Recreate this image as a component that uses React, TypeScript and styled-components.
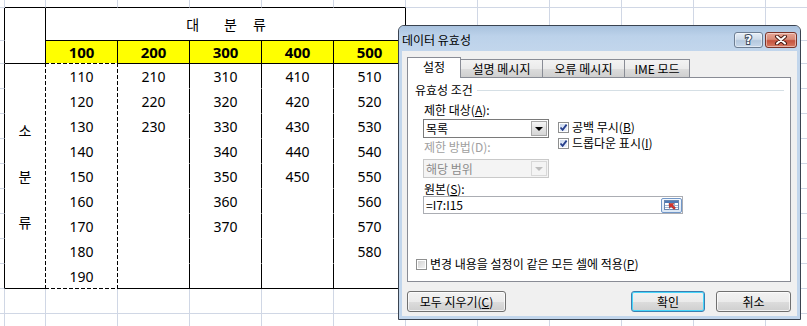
import React from 'react';
import styled, { createGlobalStyle } from 'styled-components';

const GlobalStyle = createGlobalStyle`
  html, body {
    margin: 0;
    padding: 0;
    background: #fff;
  }
  body {
    width: 807px;
    height: 326px;
    overflow: hidden;
  }
`;

const gridLine = '#d0d7e5';
const uiFont = `"Noto Sans CJK KR", "Noto Sans", sans-serif`;

const Page = styled.div`
  position: relative;
  width: 807px;
  height: 326px;
  overflow: hidden;
  font-family: "Noto Sans", "Noto Sans CJK KR", sans-serif;
`;

/* ---------- spreadsheet ---------- */

const Sheet = styled.div`
  display: grid;
  grid-template-columns: 5px 41px repeat(11, 72px);
  grid-template-rows: 8px 33px 23px repeat(11, 25px);
`;

const GridCell = styled.div<{ $right?: boolean; $bottom?: boolean }>`
  box-sizing: border-box;
  border-right: 1px solid ${p => (p.$right ? '#000' : gridLine)};
  border-bottom: 1px solid ${p => (p.$bottom ? '#000' : gridLine)};
`;

const Corner = styled.div`
  grid-column: 2 / 3;
  grid-row: 2 / 4;
  background: #fff;
  border-right: 1px solid #000;
  border-bottom: 1px solid #000;
`;

const Title = styled.div`
  grid-column: 3 / 8;
  grid-row: 2 / 3;
  background: #fff;
  border-right: 1px solid #000;
  border-bottom: 1px solid #000;
  display: flex;
  align-items: center;
  justify-content: center;
  font-family: "Noto Sans CJK KR", sans-serif;
  font-size: 14px;
  padding-left: 1px;
`;

const Gap = styled.span<{ $w: number }>`
  display: inline-block;
  width: ${p => p.$w}px;
`;

const HeadCell = styled.div<{ $col: number }>`
  grid-column: ${p => p.$col} / span 1;
  grid-row: 3 / 4;
  background: #ffff00;
  border-right: 1px solid #000;
  border-bottom: 1px solid #000;
  display: flex;
  align-items: center;
  justify-content: center;
  font-size: 15px;
  font-weight: 700;
`;

const SideHead = styled.div`
  grid-column: 2 / 3;
  grid-row: 4 / 13;
  background: #fff;
  border-right: 1px solid #000;
  border-bottom: 1px solid #000;
  display: flex;
  flex-direction: column;
  align-items: center;
  justify-content: center;
  gap: 26px;
  font-family: "Noto Sans CJK KR", sans-serif;
  font-size: 14px;
  line-height: 20px;
`;

const DataCell = styled.div<{ $col: number; $row: number; $last: boolean }>`
  grid-column: ${p => p.$col} / span 1;
  grid-row: ${p => p.$row} / span 1;
  background: #fff;
  border-right: 1px solid #000;
  border-bottom: 1px solid ${p => (p.$last ? '#000' : '#fff')};
  display: flex;
  align-items: center;
  justify-content: center;
  font-size: 14px;
`;

const ants = (dir: string) =>
  `repeating-linear-gradient(${dir}, #000 0 4px, #fff 4px 6px)`;

const Marquee = styled.div`
  grid-column: 3 / 4;
  grid-row: 4 / 13;
  margin: -1px 0 0 -1px;
  z-index: 1;
  pointer-events: none;
  background:
    ${ants('90deg')} top left / 100% 1px no-repeat,
    ${ants('90deg')} bottom left / 100% 1px no-repeat,
    ${ants('180deg')} top left / 1px 100% no-repeat,
    ${ants('180deg')} top right / 1px 100% no-repeat;
`;

const headers = ['100', '200', '300', '400', '500'];
const columns: string[][] = [
  ['110', '120', '130', '140', '150', '160', '170', '180', '190'],
  ['210', '220', '230'],
  ['310', '320', '330', '340', '350', '360', '370'],
  ['410', '420', '430', '440', '450'],
  ['510', '520', '530', '540', '550', '560', '570', '580'],
];

const SHEET_ROWS = 14;
const SHEET_COLS = 13;

const backgroundCells = () => {
  const cells: { r: number; c: number }[] = [];
  for (let r = 0; r < SHEET_ROWS; r++) {
    for (let c = 0; c < SHEET_COLS; c++) {
      const inTable = r >= 1 && r <= 11 && c >= 1 && c <= 6;
      if (!inTable) cells.push({ r, c });
    }
  }
  return cells;
};

const Spreadsheet = () => (
  <Sheet>
    <Corner />
    <Title>
      대<Gap $w={25}> </Gap>분<Gap $w={16}> </Gap>류
    </Title>
    {headers.map((h, i) => (
      <HeadCell key={h} $col={i + 3}>{h}</HeadCell>
    ))}
    <SideHead>
      <span>소</span>
      <span>분</span>
      <span>류</span>
    </SideHead>
    {columns.map((col, ci) =>
      Array.from({ length: 9 }, (_, ri) => (
        <DataCell key={`${ci}-${ri}`} $col={ci + 3} $row={ri + 4} $last={ri === 8}>
          {col[ri] || ''}
        </DataCell>
      ))
    )}
    <Marquee />
    {backgroundCells().map(({ r, c }) => (
      <GridCell
        key={`g${r}-${c}`}
        $right={c === 0 && r >= 1 && r <= 11}
        $bottom={r === 0 && c >= 1 && c <= 6}
      />
    ))}
  </Sheet>
);

/* ---------- dialog ---------- */

const Dialog = styled.div`
  position: absolute;
  left: 398px;
  top: 25px;
  width: 403px;
  height: 295px;
  box-sizing: border-box;
  border: 1px solid #3a4350;
  border-radius: 6px 6px 0 0;
  background: #c2d6ec;
  display: flex;
  flex-direction: column;
  overflow: hidden;
  font-family: ${uiFont};
  font-size: 12px;
  color: #000;
  z-index: 5;
`;

const TitleBar = styled.div`
  height: 25px;
  flex: none;
  display: flex;
  align-items: flex-start;
  padding: 0 3px;
  background: linear-gradient(#a9c2de, #bcd2ea 40%, #c2d6ec);
`;

const TitleText = styled.div`
  flex: 1;
  line-height: 14px;
  margin-top: 7px;
`;

const Captions = styled.div`
  display: flex;
  gap: 2px;
  margin-top: 6px;
`;

const CaptionButton = styled.div<{ $close?: boolean }>`
  width: ${p => (p.$close ? 32 : 29)}px;
  height: 16px;
  box-sizing: border-box;
  border: 1px solid ${p => (p.$close ? '#7a3328' : '#6d7e93')};
  border-radius: 3px;
  background: ${p =>
    p.$close
      ? 'linear-gradient(#e7a595, #d88b78 45%, #c5523d 55%, #d67a62)'
      : 'linear-gradient(#e6eef7, #cfdcea 45%, #b4c8de 55%, #c8d8ea)'};
  box-shadow: inset 0 0 0 1px rgba(255, 255, 255, 0.45);
  display: flex;
  align-items: center;
  justify-content: center;
`;

const HelpGlyph = styled.span`
  font-family: "DejaVu Sans", sans-serif;
  font-weight: 700;
  font-size: 12px;
  line-height: 12px;
  color: #fff;
  -webkit-text-stroke: 2px #3c4a5c;
  paint-order: stroke fill;
`;

const Body = styled.div`
  flex: 1;
  margin: 0 3px 3px;
  background: #f0f0f0;
  padding: 6px 6px 0 5px;
  display: flex;
  flex-direction: column;
`;

const Tabs = styled.div`
  display: flex;
  align-items: flex-end;
  height: 21px;
  margin-bottom: -1px;
  position: relative;
  z-index: 1;
`;

const Tab = styled.div<{ $active?: boolean; $w: number }>`
  width: ${p => p.$w}px;
  height: ${p => (p.$active ? 21 : 19)}px;
  box-sizing: border-box;
  border: 1px solid #898c95;
  border-bottom: ${p => (p.$active ? 'none' : '1px solid #898c95')};
  border-left-width: ${p => (p.$active ? 1 : 0)}px;
  background: ${p => (p.$active ? '#fff' : 'linear-gradient(#f3f3f3, #ebebeb 50%, #dddddd 51%, #cfcfcf)')};
  display: flex;
  align-items: center;
  justify-content: center;
  padding-bottom: ${p => (p.$active ? 2 : 0)}px;
  line-height: 14px;
`;

const Panel = styled.div`
  height: 205px;
  box-sizing: border-box;
  border: 1px solid #898c95;
  background: #fff;
  padding: 5px 6px 0 7px;
  display: flex;
  flex-direction: column;
`;

const GroupHeader = styled.div`
  display: flex;
  align-items: center;
  height: 14px;
  line-height: 14px;

  &::after {
    content: '';
    flex: 1;
    margin-left: 4px;
    border-top: 1px solid #d5dfe5;
  }
`;

const Fields = styled.div`
  display: flex;
  margin-top: 6px;
  padding-left: 8px;
`;

const FieldCol = styled.div<{ $w?: number }>`
  width: ${p => (p.$w ? `${p.$w}px` : 'auto')};
  display: flex;
  flex-direction: column;
`;

const RightCol = styled.div`
  display: flex;
  flex-direction: column;
  padding: 16px 0 0 9px;
`;

const Label = styled.div<{ $disabled?: boolean; $top?: number }>`
  height: 14px;
  line-height: 14px;
  margin: ${p => p.$top ?? 0}px 0 0 1px;
  color: ${p => (p.$disabled ? '#a0a0a0' : '#000')};
  white-space: nowrap;
`;

const Select = styled.div<{ $disabled?: boolean; $top?: number }>`
  height: 19px;
  margin-top: ${p => p.$top ?? 0}px;
  box-sizing: border-box;
  border: 1px solid ${p => (p.$disabled ? '#c9c9c9' : '#7a7a7a')};
  background: ${p => (p.$disabled ? '#f4f4f4' : '#fff')};
  color: ${p => (p.$disabled ? '#8b8b8b' : '#000')};
  display: flex;
  align-items: center;
  padding-left: 2px;
`;

const SelectText = styled.span`
  flex: 1;
  line-height: 14px;
`;

const ArrowButton = styled.div<{ $disabled?: boolean }>`
  width: 16px;
  height: 15px;
  margin-right: 1px;
  box-sizing: border-box;
  border: 1px solid ${p => (p.$disabled ? '#d8d8d8' : '#a7a7a7')};
  background: ${p => (p.$disabled ? '#f4f4f4' : 'linear-gradient(#f6f6f6, #e3e3e3 50%, #d6d6d6)')};
  display: flex;
  align-items: center;
  justify-content: center;

  &::before {
    content: '';
    border-left: 4px solid transparent;
    border-right: 4px solid transparent;
    border-top: 4px solid ${p => (p.$disabled ? '#bdbdbd' : '#000')};
  }
`;

const CheckRow = styled.div<{ $top?: number }>`
  display: flex;
  align-items: center;
  height: 16px;
  gap: 3px;
  margin-top: ${p => p.$top ?? 0}px;
  white-space: nowrap;
  line-height: 14px;
`;

const Box = styled.span<{ $checked?: boolean }>`
  width: 11px;
  height: 11px;
  flex: none;
  box-sizing: border-box;
  border: 1px solid #8e8f8f;
  background: ${p =>
    p.$checked
      ? 'linear-gradient(135deg, #c9d8ee, #eef3fb)'
      : 'linear-gradient(135deg, #cfcfcf, #f6f6f6)'};
  box-shadow: inset 0 0 0 1px #fff;
  display: flex;
  align-items: center;
  justify-content: center;
`;

const SourceInput = styled.div`
  width: 260px;
  height: 18px;
  box-sizing: border-box;
  border: 1px solid #abadb3;
  background: #fff;
  display: flex;
  align-items: center;
  padding-left: 2px;
`;

const InputText = styled.span`
  flex: 1;
  line-height: 14px;
`;

const RangeButton = styled.div`
  width: 21px;
  height: 15px;
  box-sizing: border-box;
  border: 1px solid #7197c8;
  border-radius: 2px;
  background: linear-gradient(#f4f8fd, #dbe7f5);
  display: flex;
  align-items: center;
  justify-content: center;
`;

const BottomCheck = styled(CheckRow)`
  margin-left: 1px;
`;

const Buttons = styled.div`
  display: flex;
  margin-top: 9px;
  gap: 11px;
`;

const Button = styled.div<{ $w: number; $focus?: boolean; $push?: boolean }>`
  width: ${p => p.$w}px;
  height: 21px;
  box-sizing: border-box;
  margin-left: ${p => (p.$push ? 'auto' : '0')};
  border: 1px solid ${p => (p.$focus ? '#3c7fb1' : '#707070')};
  border-radius: 3px;
  background: linear-gradient(#f2f2f2, #ebebeb 50%, #dddddd 51%, #cfcfcf);
  box-shadow: inset 0 0 0 1px ${p => (p.$focus ? '#48d6fb' : 'rgba(255,255,255,0.7)')};
  display: flex;
  align-items: center;
  justify-content: center;
  line-height: 14px;
`;

const CheckMark = () => (
  <svg width="9" height="9" viewBox="0 0 9 9">
    <path d="M1.5 4.5 L3.6 6.8 L7.6 1.6" fill="none" stroke="#263f8c" strokeWidth="1.8" />
  </svg>
);

const CloseGlyph = () => (
  <svg width="14" height="10" viewBox="0 0 14 10">
    <path d="M3 1.5 L11 8.5 M11 1.5 L3 8.5" stroke="#4a1c14" strokeWidth="4" strokeLinecap="round" />
    <path d="M3 1.5 L11 8.5 M11 1.5 L3 8.5" stroke="#fff" strokeWidth="2" strokeLinecap="round" />
  </svg>
);

const RangeIcon = () => (
  <svg width="15" height="10" viewBox="0 0 15 10">
    <rect x="0.5" y="0.5" width="14" height="9" fill="#fff" stroke="#6a87b0" />
    <rect x="1" y="1" width="13" height="2" fill="#4f79b5" />
    <path d="M1 5.5 H14 M1 7.5 H14 M5.5 3 V9.5 M10.5 3 V9.5" stroke="#9fb4d2" strokeWidth="1" />
    <path d="M5 3.5 L10 3.5 L8.6 5 L11.5 8 L10 9.4 L7.1 6.4 L5.6 7.9 Z" fill="#d9322a" stroke="#8a1a14" strokeWidth="0.5" />
  </svg>
);

const ValidationDialog = () => (
  <Dialog>
    <TitleBar>
      <TitleText>데이터 유효성</TitleText>
      <Captions>
        <CaptionButton>
          <HelpGlyph>?</HelpGlyph>
        </CaptionButton>
        <CaptionButton $close>
          <CloseGlyph />
        </CaptionButton>
      </Captions>
    </TitleBar>
    <Body>
      <Tabs>
        <Tab $active $w={54}>설정</Tab>
        <Tab $w={82}>설명 메시지</Tab>
        <Tab $w={82}>오류 메시지</Tab>
        <Tab $w={65}>IME 모드</Tab>
      </Tabs>
      <Panel>
        <GroupHeader>유효성 조건</GroupHeader>
        <Fields>
          <FieldCol $w={126}>
            <Label>제한 대상(<u>A</u>):</Label>
            <Select $top={2}>
              <SelectText>목록</SelectText>
              <ArrowButton />
            </Select>
            <Label $disabled $top={2}>제한 방법(D):</Label>
            <Select $disabled $top={5}>
              <SelectText>해당 범위</SelectText>
              <ArrowButton $disabled />
            </Select>
          </FieldCol>
          <RightCol>
            <CheckRow>
              <Box $checked><CheckMark /></Box>
              <span>공백 무시(<u>B</u>)</span>
            </CheckRow>
            <CheckRow>
              <Box $checked><CheckMark /></Box>
              <span>드롭다운 표시(<u>I</u>)</span>
            </CheckRow>
          </RightCol>
        </Fields>
        <Fields>
          <FieldCol>
            <Label $top={-2}>원본(<u>S</u>):</Label>
            <SourceInput>
              <InputText>=I7:I15</InputText>
              <RangeButton>
                <RangeIcon />
              </RangeButton>
            </SourceInput>
          </FieldCol>
        </Fields>
        <BottomCheck $top={42}>
          <Box />
          <span>변경 내용을 설정이 같은 모든 셀에 적용(<u>P</u>)</span>
        </BottomCheck>
      </Panel>
      <Buttons>
        <Button $w={99}>모두 지우기(<u>C</u>)</Button>
        <Button $w={74} $focus $push>확인</Button>
        <Button $w={75}>취소</Button>
      </Buttons>
    </Body>
  </Dialog>
);

export default function App() {
  return (
    <Page>
      <GlobalStyle />
      <Spreadsheet />
      <ValidationDialog />
    </Page>
  );
}
